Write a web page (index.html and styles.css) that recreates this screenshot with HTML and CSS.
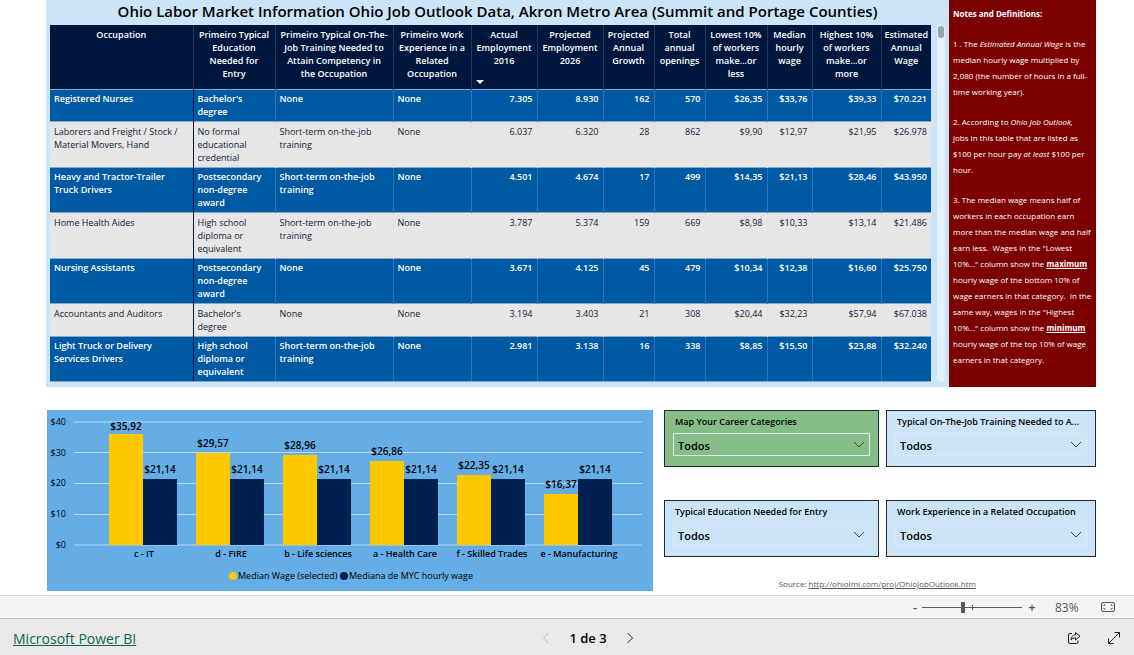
FILE: index.html
```html
<!DOCTYPE html>
<html lang="en">
<head>
<meta charset="utf-8">
<title>Ohio Job Outlook</title>
<link rel="stylesheet" href="styles.css">
</head>
<body>
<main class="report">
  <section class="top">
    <div class="outlook">
      <h1 class="title">Ohio Labor Market Information Ohio Job Outlook Data, Akron Metro Area (Summit and Portage Counties)</h1>
      <div class="table-area">
        <table class="jobs">
          <colgroup><col class="w-occ"><col class="w-edu"><col class="w-train"><col class="w-exp"><col class="w-emp"><col class="w-emp"><col class="w-growth"><col class="w-growth"><col class="w-low"><col class="w-med"><col class="w-high"><col class="w-year"></colgroup>
          <thead>
            <tr><th>Occupation</th><th>Primeiro Typical<br>Education<br>Needed for<br>Entry</th><th>Primeiro Typical On-The-<br>Job Training Needed to<br>Attain Competency in<br>the Occupation</th><th>Primeiro Work<br>Experience in a<br>Related<br>Occupation</th><th>Actual<br>Employment<br>2016<span class="sort"></span></th><th>Projected<br>Employment<br>2026</th><th>Projected<br>Annual<br>Growth</th><th>Total<br>annual<br>openings</th><th>Lowest 10%<br>of workers<br>make...or<br>less</th><th>Median<br>hourly<br>wage</th><th>Highest 10%<br>of workers<br>make...or<br>more</th><th>Estimated<br>Annual<br>Wage</th></tr>
          </thead>
          <tbody>
            <tr><td>Registered Nurses</td><td>Bachelor's<br>degree</td><td>None</td><td>None</td><td>7.305</td><td>8.930</td><td>162</td><td>570</td><td>$26,35</td><td>$33,76</td><td>$39,33</td><td>$70.221</td></tr>
            <tr><td>Laborers and Freight / Stock /<br>Material Movers, Hand</td><td>No formal<br>educational<br>credential</td><td>Short-term on-the-job<br>training</td><td>None</td><td>6.037</td><td>6.320</td><td>28</td><td>862</td><td>$9,90</td><td>$12,97</td><td>$21,95</td><td>$26.978</td></tr>
            <tr><td>Heavy and Tractor-Trailer<br>Truck Drivers</td><td>Postsecondary<br>non-degree<br>award</td><td>Short-term on-the-job<br>training</td><td>None</td><td>4.501</td><td>4.674</td><td>17</td><td>499</td><td>$14,35</td><td>$21,13</td><td>$28,46</td><td>$43.950</td></tr>
            <tr><td>Home Health Aides</td><td>High school<br>diploma or<br>equivalent</td><td>Short-term on-the-job<br>training</td><td>None</td><td>3.787</td><td>5.374</td><td>159</td><td>669</td><td>$8,98</td><td>$10,33</td><td>$13,14</td><td>$21.486</td></tr>
            <tr><td>Nursing Assistants</td><td>Postsecondary<br>non-degree<br>award</td><td>None</td><td>None</td><td>3.671</td><td>4.125</td><td>45</td><td>479</td><td>$10,34</td><td>$12,38</td><td>$16,60</td><td>$25.750</td></tr>
            <tr><td>Accountants and Auditors</td><td>Bachelor's<br>degree</td><td>None</td><td>None</td><td>3.194</td><td>3.403</td><td>21</td><td>308</td><td>$20,44</td><td>$32,23</td><td>$57,94</td><td>$67.038</td></tr>
            <tr><td>Light Truck or Delivery<br>Services Drivers</td><td>High school<br>diploma or<br>equivalent</td><td>Short-term on-the-job<br>training</td><td>None</td><td>2.981</td><td>3.138</td><td>16</td><td>338</td><td>$8,85</td><td>$15,50</td><td>$23,88</td><td>$32.240</td></tr>
          </tbody>
        </table>
        <div class="scrollbar"><div class="scroll-thumb"></div></div>
      </div>
    </div>
    <aside class="notes">
      <h2>Notes and Definitions:</h2>
      <p>1 . The <em>Estimated Annual Wage</em> is the<br>median hourly wage multiplied by<br>2,080 (the number of hours in a full-<br>time working year).</p>
      <p>2. According to <em>Ohio Job Outlook,</em><br>jobs in this table that are listed as<br>$100 per hour pay <em>at least</em> $100 per<br>hour.</p>
      <p>3. The median wage means half of<br>workers in each occupation earn<br>more than the median wage and half<br>earn less.&nbsp; Wages in the "Lowest<br>10%..." column show the <strong>maximum</strong><br>hourly wage of the bottom 10% of<br>wage earners in that category.&nbsp; In the<br>same way, wages in the "Highest<br>10%..." column show the <strong>minimum</strong><br>hourly wage of the top 10% of wage<br>earners in that category.</p>
    </aside>
  </section>

  <section class="bottom">
    <svg class="chart" viewBox="0 0 606 181" role="img" aria-label="Median wage by career category">
      <g class="grid-lines">
        <path d="M27 12H595M27 42.500H595M27 73.500H595M27 104.500H595M27 135H595"/>
      </g>
      <g class="axis">
        <text x="19" y="15">$40</text><text x="19" y="46">$30</text><text x="19" y="76">$20</text><text x="19" y="107">$10</text><text x="19" y="138">$0</text>
      </g>
      <g class="bar-selected">
        <rect x="62" y="24" width="34" height="111"/><rect x="149" y="43" width="34" height="92"/><rect x="236" y="45" width="34" height="90"/><rect x="323" y="51" width="34" height="84"/><rect x="410" y="65" width="34" height="70"/><rect x="497" y="84" width="34" height="51"/>
      </g>
      <g class="bar-median">
        <rect x="96" y="69" width="34" height="66"/><rect x="183" y="69" width="34" height="66"/><rect x="270" y="69" width="34" height="66"/><rect x="357" y="69" width="34" height="66"/><rect x="444" y="69" width="34" height="66"/><rect x="531" y="69" width="34" height="66"/>
      </g>
      <g class="value">
        <text x="79" y="20">$35,92</text><text x="166" y="37">$29,57</text><text x="253" y="39">$28,96</text><text x="340" y="45">$26,86</text><text x="427" y="59">$22,35</text><text x="514" y="78">$16,37</text>
        <text x="113" y="63">$21,14</text><text x="200" y="63">$21,14</text><text x="287" y="63">$21,14</text><text x="374" y="63">$21,14</text><text x="461" y="63">$21,14</text><text x="548" y="63">$21,14</text>
      </g>
      <g class="category">
        <text x="97" y="147">c - IT</text><text x="184" y="147">d - FIRE</text><text x="271" y="147">b - Life sciences</text><text x="358" y="147">a - Health Care</text><text x="445" y="147">f - Skilled Trades</text><text x="532" y="147">e - Manufacturing</text>
      </g>
      <g class="legend">
        <circle class="bar-selected" cx="186" cy="166" r="4"/><text x="191" y="169">Median Wage (selected)</text>
        <circle class="bar-median" cx="297" cy="166" r="4"/><text x="302" y="169">Mediana de MYC hourly wage</text>
      </g>
    </svg>

    <div class="side">
      <div class="slicers">
        <div class="slicer slicer-green">
          <label for="career">Map Your Career Categories</label>
          <div class="pick"><select id="career"><option>Todos</option></select><svg class="chevron" viewBox="0 0 12 8"><path d="M1 1L6 6L11 1"/></svg></div>
        </div>
        <div class="slicer">
          <label for="training">Typical On-The-Job Training Needed to A...</label>
          <div class="pick"><select id="training"><option>Todos</option></select><svg class="chevron" viewBox="0 0 12 8"><path d="M1 1L6 6L11 1"/></svg></div>
        </div>
        <div class="slicer">
          <label for="education">Typical Education Needed for Entry</label>
          <div class="pick"><select id="education"><option>Todos</option></select><svg class="chevron" viewBox="0 0 12 8"><path d="M1 1L6 6L11 1"/></svg></div>
        </div>
        <div class="slicer">
          <label for="experience">Work Experience in a Related Occupation</label>
          <div class="pick"><select id="experience"><option>Todos</option></select><svg class="chevron" viewBox="0 0 12 8"><path d="M1 1L6 6L11 1"/></svg></div>
        </div>
      </div>
      <p class="source">Source: <a href="http://ohiolmi.com/proj/OhioJobOutlook.htm">http://ohiolmi.com/proj/OhioJobOutlook.htm</a></p>
    </div>
  </section>
</main>

<div class="zoombar">
  <button class="zoom-step" type="button">-</button>
  <input class="zoom-range" type="range" min="0" max="100" value="41" aria-label="Zoom">
  <button class="zoom-step" type="button">+</button>
  <span class="zoom-value">83%</span>
  <button class="icon-button" type="button" aria-label="Fit to page"><svg width="16" height="12" viewBox="0 0 16 12"><rect x="1.500" y="1.500" width="13" height="9" rx="1.500"/><path d="M4 5V4H5.500M10.500 4H12V5M12 7V8H10.500M5.500 8H4V7"/></svg></button>
</div>

<footer class="footer">
  <a class="brand" href="#">Microsoft Power BI</a>
  <nav class="pager">
    <button class="icon-button prev" type="button" aria-label="Previous page"><svg width="8" height="12" viewBox="0 0 8 12"><path d="M6.500 1L1.500 6L6.500 11"/></svg></button>
    <span>1 de 3</span>
    <button class="icon-button" type="button" aria-label="Next page"><svg width="8" height="12" viewBox="0 0 8 12"><path d="M1.500 1L6.500 6L1.500 11"/></svg></button>
  </nav>
  <div class="actions">
    <button class="icon-button" type="button" aria-label="Share"><svg width="14" height="14" viewBox="0 0 14 14"><path d="M5 2.500H3Q1.500 2.500 1.500 4V11Q1.500 12.500 3 12.500H9.500Q11 12.500 11 11V9.500"/><path d="M8.500 1.500L13 5.200L8.500 9V6.800Q5.500 6.800 4 9Q4.300 4.200 8.500 3.700Z"/></svg></button>
    <button class="icon-button" type="button" aria-label="Full screen"><svg width="14" height="14" viewBox="0 0 14 14"><path d="M1.500 12.500L12.500 1.500M7.500 1.500H12.500V6.500M1.500 7.500V12.500H6.500"/></svg></button>
  </div>
</footer>
</body>
</html>
```

FILE: styles.css
```css
* { box-sizing: border-box; }
body {
  margin: 0;
  min-height: 100vh;
  display: flex;
  flex-direction: column;
  background: #fff;
  color: #000;
  font-family: "Open Sans", "Noto Sans", sans-serif;
  font-size: 9px;
}
h1, h2, p { margin: 0; }
button { padding: 0; border: 0; background: none; font-family: inherit; }
svg { display: block; }

.report { flex: 1; padding: 0 38px 0 46px; }
.top { display: flex; }
.outlook { flex: 1; background: #cbe4f8; padding: 0 4px 5px 4px; }
.title { font-size: 15px; line-height: 23px; font-weight: 600; text-align: center; white-space: nowrap; padding: 0 0 2px; }
.table-area { display: flex; gap: 6px; }

.jobs { flex: 1; table-layout: fixed; border-collapse: collapse; line-height: 13px; }
.w-occ { width: 143px; }
.w-edu { width: 82px; }
.w-train { width: 118px; }
.w-exp { width: 78px; }
.w-emp { width: 66px; }
.w-growth { width: 51px; }
.w-low { width: 62px; }
.w-med { width: 45px; }
.w-high { width: 69px; }
.w-year { width: 50px; }
.jobs th { position: relative; height: 64px; padding: 3px 0 8px; vertical-align: top; background: #00173d; color: #fff; font-weight: 600; white-space: nowrap; border-right: 1px solid #22375a; }
.sort { position: absolute; left: 4px; bottom: 5px; border: 4px solid transparent; border-top-color: #fff; border-bottom: 0; }
.jobs td { padding: 3px 4px; vertical-align: top; border-top: 1px solid #82a9cd; white-space: nowrap; background: #e6e6e6; color: #14203a; }
.jobs td + td { border-left: 1px solid #e0e2e5; }
.jobs tr:nth-child(odd) td { padding-top: 2px; background: #0059a3; color: #fff; font-weight: 600; }
.jobs tr:nth-child(odd) td + td { border-left-color: #2a75b5; }
.jobs tbody td:nth-child(2), .jobs tbody tr:nth-child(odd) td:nth-child(2) { border-left-color: #00173d; }
.jobs tbody tr:last-child td { border-bottom: 1px solid #82a9cd; }
.jobs td:nth-child(n+5) { text-align: right; }
.jobs th:last-child { border-right: 0; }
.scrollbar { width: 8px; border-radius: 4px; background: #e2f0fb; }
.scroll-thumb { height: 12px; margin: 1px; border-radius: 3px; background: #98a3ad; }

.notes { width: 147px; background: #7d0000; color: #fff; padding: 6px 4px 0 4px; font-size: 8px; line-height: 16px; font-weight: 400; white-space: nowrap; }
.notes h2 { font-size: 8px; line-height: 16px; font-weight: 700; }
.notes p { margin-top: 14px; }
.notes strong { font-weight: 700; text-decoration: underline; }

.bottom { display: flex; align-items: flex-start; gap: 11px; padding: 23px 0 4px 1px; }
.chart { flex: 606; min-width: 0; background: #65ade7; font-size: 9px; }
.grid-lines { stroke: #b9daf4; stroke-width: 1; }
.axis { text-anchor: end; }
.bar-selected { fill: #ffc900; }
.bar-median { fill: #00204f; }
.value { text-anchor: middle; font-size: 10px; font-weight: 600; }
.category { text-anchor: middle; font-weight: 600; }

.side { flex: 432; min-width: 0; }
.slicers { display: grid; grid-template-columns: 215fr 210fr; gap: 33px 7px; }
.slicer { height: 57px; border: 1px solid #1d2a36; background: #cbe4f8; padding: 5px 8px; }
.slicer-green { background: #87bd87; }
.slicer label { display: block; padding-left: 2px; font-size: 9px; line-height: 12px; font-weight: 600; white-space: nowrap; }
.pick { position: relative; margin-top: 5px; }
.pick select { display: block; width: 100%; height: 23px; padding: 2px 4px 0; appearance: none; border: 1px solid #dde7f1; border-radius: 0; background: transparent; color: #000; font-family: inherit; font-size: 11px; font-weight: 600; }
.chevron { position: absolute; right: 5px; top: 8px; width: 12px; height: 8px; fill: none; stroke: #444; }
.source { margin-top: 21px; font-size: 8px; line-height: 12px; text-align: right; padding-right: 120px; color: #555; white-space: nowrap; }
.source a { color: inherit; }

.zoombar { display: flex; align-items: center; justify-content: flex-end; height: 23px; padding-right: 18px; border-top: 1px solid #dcdcdc; background: #f4f4f4; color: #555; }
.zoom-step { width: 10px; color: #555; font-size: 13px; font-weight: 600; line-height: 16px; }
.zoom-range { appearance: none; width: 100px; height: 11px; margin: 0 5px 0 2px; background: linear-gradient(#5a5a5a, #5a5a5a) 50px 3px / 1px 5px no-repeat, linear-gradient(#5a5a5a, #5a5a5a) 0 5px / 100% 1px no-repeat; }
.zoom-range::-webkit-slider-thumb { appearance: none; width: 4px; height: 11px; background: #5a5a5a; }
.zoom-value { width: 45px; padding-left: 18px; margin-right: 18px; font-size: 12px; }
.icon-button { color: #222; }
.icon-button svg { fill: none; stroke: currentColor; }
.zoombar .icon-button { color: #555; }

.footer { display: grid; grid-template-columns: 1fr auto 1fr; align-items: center; height: 37px; padding: 2px 13px 0; border-top: 1px solid #c4c4c4; background: #e9e9e9; }
.brand { color: #0f6458; font-size: 14px; }
.pager { display: flex; align-items: center; gap: 19px; padding-left: 42px; font-size: 13px; font-weight: 600; }
.prev { color: #bbb; }
.actions { display: flex; justify-content: flex-end; gap: 26px; }
```
